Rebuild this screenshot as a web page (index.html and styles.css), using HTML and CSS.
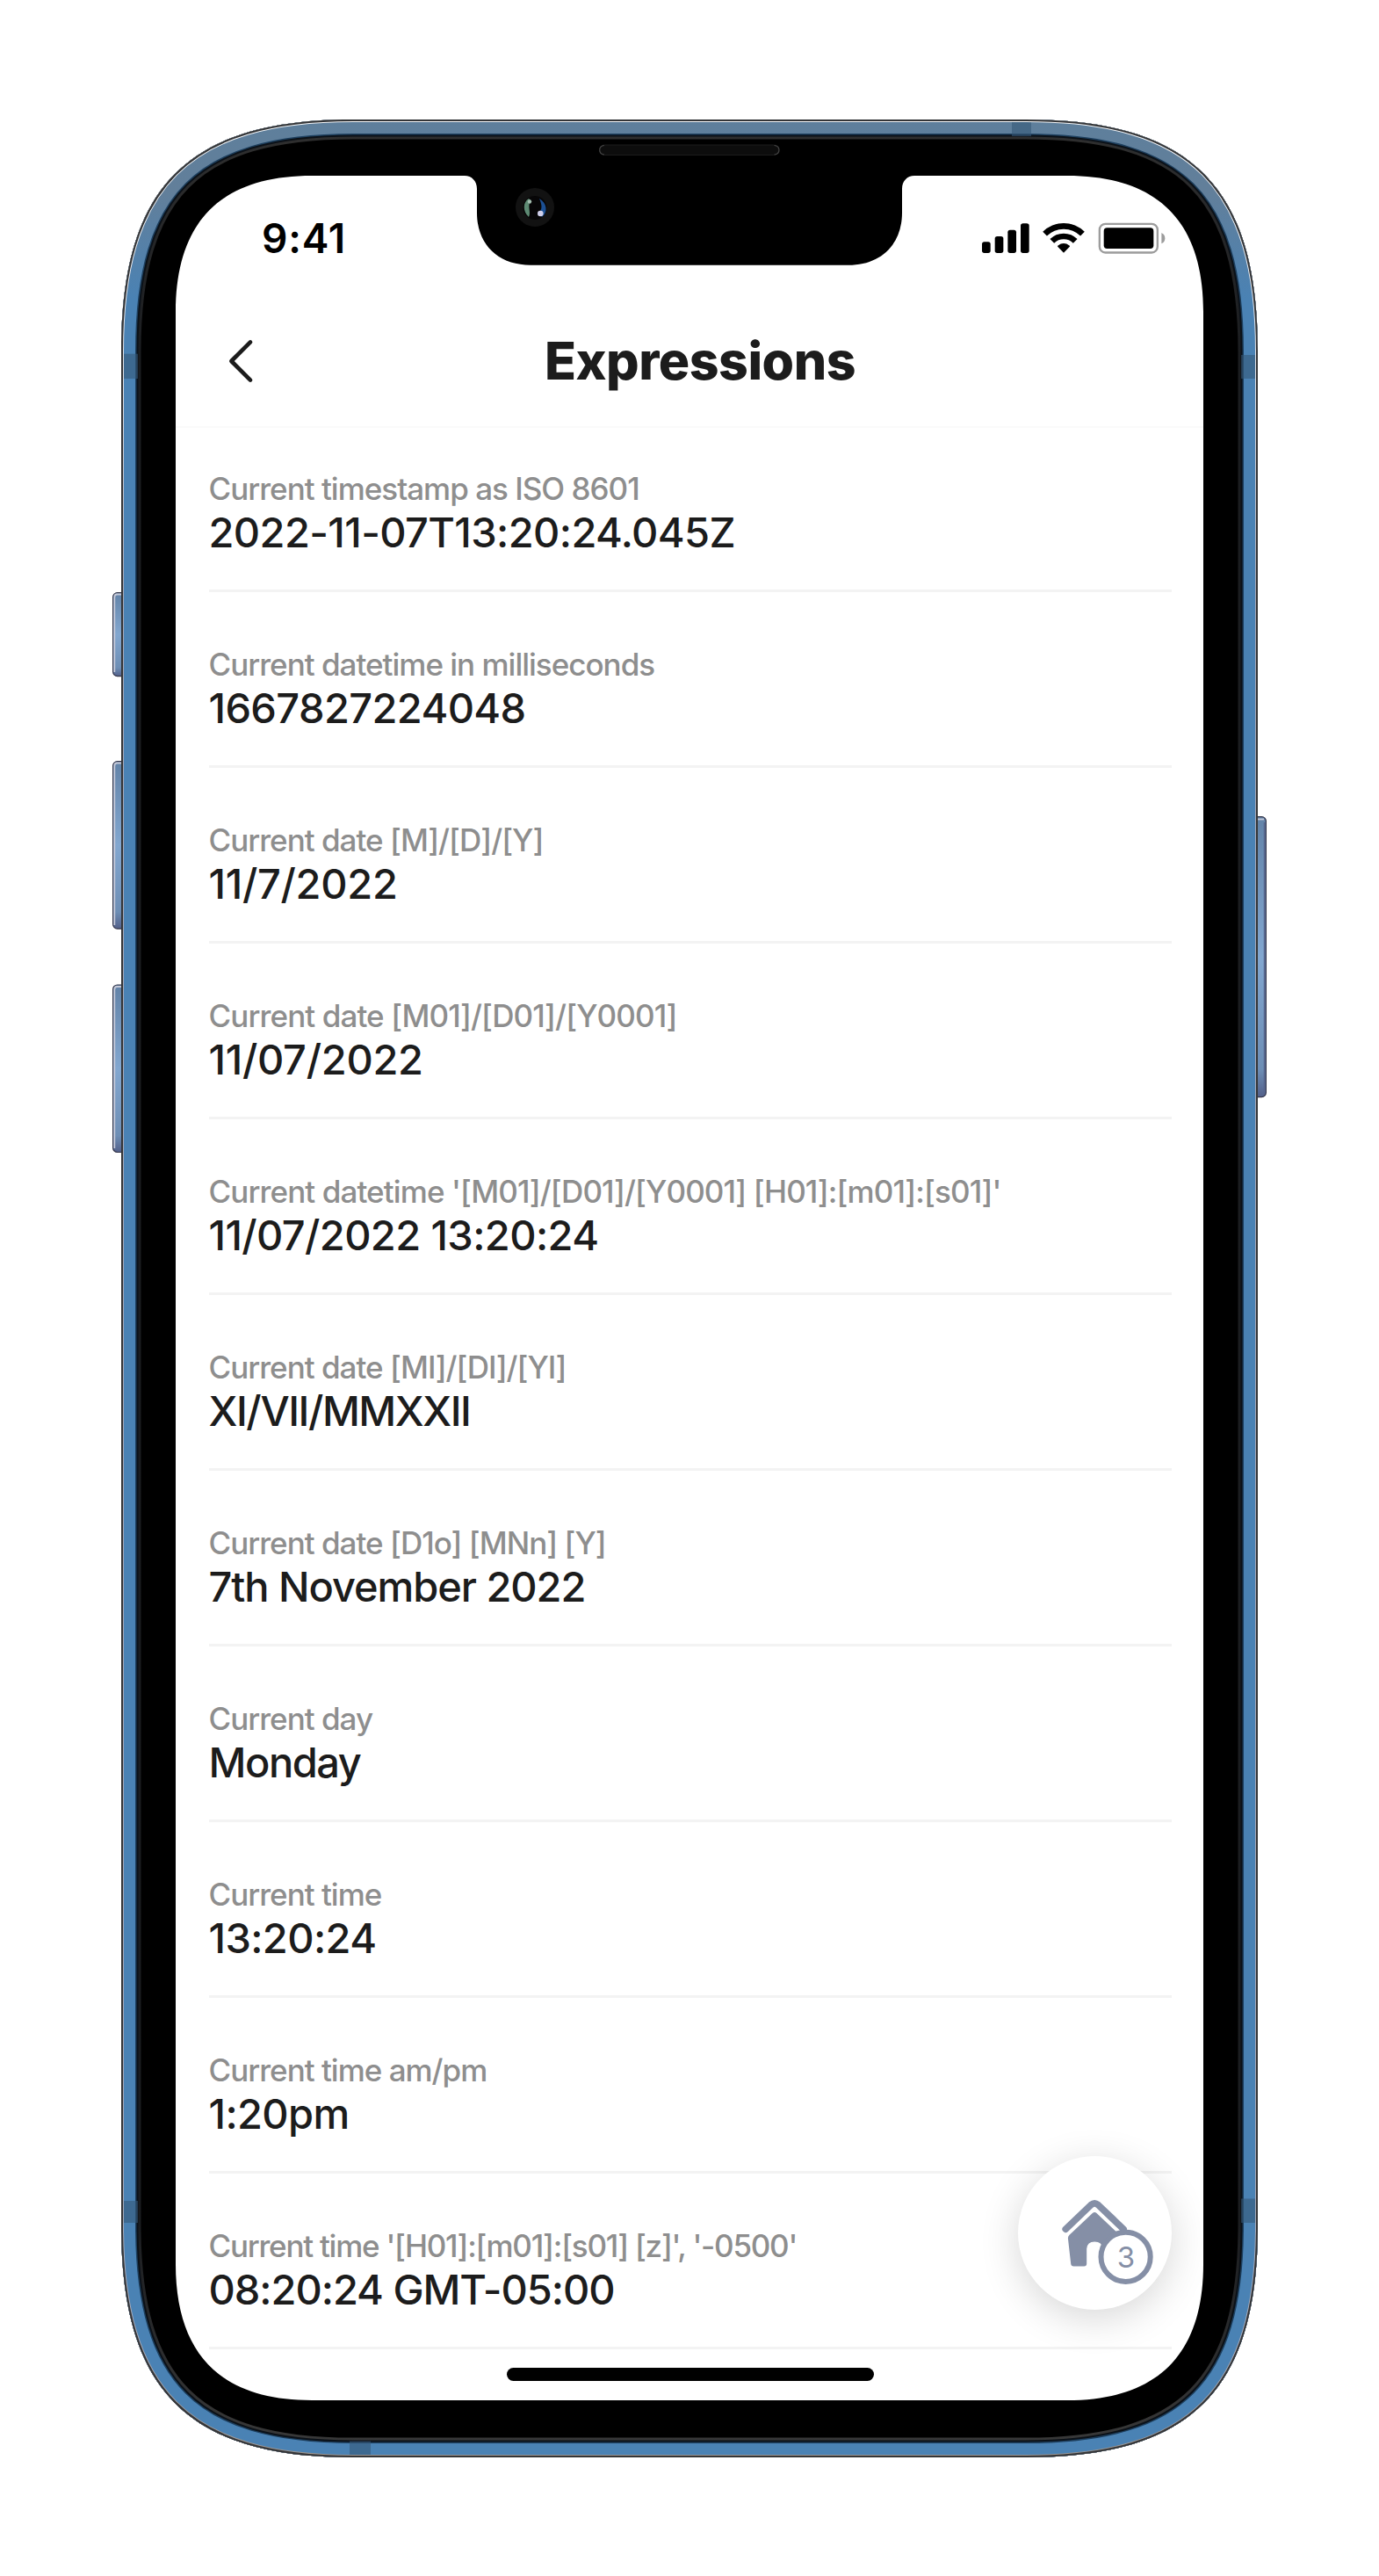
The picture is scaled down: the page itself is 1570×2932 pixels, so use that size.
FILE: index.html
```html
<!DOCTYPE html>
<html lang="en">
<head>
<meta charset="utf-8">
<title>Expressions</title>
<link rel="stylesheet" href="styles.css">
</head>
<body>
<main class="device">
  <div class="screen">
    <div class="status">
      <span class="clock">9:41</span>
      <svg class="status-icons" viewBox="233 398 626 108" aria-hidden="true">
        <rect x="233" y="465" width="29" height="38" rx="8"/>
        <rect x="277" y="446" width="29" height="57" rx="8"/>
        <rect x="321" y="424" width="29" height="79" rx="8"/>
        <rect x="365" y="402" width="29" height="101" rx="8"/>
        <g fill="none" stroke="#000" stroke-width="20">
          <path d="M447.700 437.700A91 91 0 0 1 576.300 437.700"/>
          <path d="M472.400 462.400A56 56 0 0 1 551.600 462.400"/>
        </g>
        <path d="M512 502L491.500 481.500Q490 479 492.500 477.500Q512 463 531.500 477.500Q534 479 532.500 481.500Z"/>
        <rect x="634.500" y="403.500" width="198" height="98" rx="20" fill="none" stroke="#9c9c9c" stroke-width="7"/>
        <rect x="649" y="417" width="170" height="71" rx="11"/>
        <path d="M846 434Q858 440 858 452.500T846 471Z" fill="#9c9c9c"/>
      </svg>
    </div>
    <header class="header">
      <svg class="back" viewBox="0 0 32 52" aria-hidden="true"><path d="M27 4.400L5.400 26L27 47.600"/></svg>
      <h1 class="title">Expressions</h1>
    </header>
    <ul class="list">
      <li class="row"><span class="label">Current timestamp as ISO 8601</span><span class="value">2022-11-07T13:20:24.045Z</span></li>
      <li class="row"><span class="label">Current datetime in milliseconds</span><span class="value">1667827224048</span></li>
      <li class="row"><span class="label">Current date [M]/[D]/[Y]</span><span class="value loose">11/7/2022</span></li>
      <li class="row"><span class="label loose">Current date [M01]/[D01]/[Y0001]</span><span class="value loose">11/07/2022</span></li>
      <li class="row"><span class="label loose">Current datetime '[M01]/[D01]/[Y0001] [H01]:[m01]:[s01]'</span><span class="value">11/07/2022 13:20:24</span></li>
      <li class="row"><span class="label">Current date [MI]/[DI]/[YI]</span><span class="value tighter">XI/VII/MMXXII</span></li>
      <li class="row"><span class="label">Current date [D1o] [MNn] [Y]</span><span class="value tight">7th November 2022</span></li>
      <li class="row"><span class="label">Current day</span><span class="value tighter">Monday</span></li>
      <li class="row"><span class="label">Current time</span><span class="value">13:20:24</span></li>
      <li class="row"><span class="label">Current time am/pm</span><span class="value">1:20pm</span></li>
      <li class="row"><span class="label tight">Current time '[H01]:[m01]:[s01] [z]', '-0500'</span><span class="value tight">08:20:24 GMT-05:00</span></li>
    </ul>
    <div class="home-indicator"></div>
    <div class="fab">
      <svg class="fab-icon" viewBox="296 163 526 526" aria-hidden="true">
        <path d="M459 413L546 330Q558 320 570 330L657 413" fill="none" stroke="#858fa6" stroke-width="23" stroke-linecap="round"/>
        <path d="M467 444Q467 438 472 433L551 358Q558 352 565 358L645 434L640 540H592Q586 540 586 534V480Q584 456 558 456Q533 456 531 480V531Q531 540 522 540H486Q478 540 477 532Z" fill="#858fa6"/>
        <circle cx="664.500" cy="508" r="84.500" fill="#fff" stroke="#858fa6" stroke-width="18"/>
      </svg>
      <span class="badge">3</span>
    </div>
  </div>

  <svg class="frame" viewBox="128 136 1314 2661" aria-hidden="true">
    <defs>
      <path id="body" d="M138 400C138 212 214 136 402 136H1168C1356 136 1432 212 1432 400V2533C1432 2721 1356 2797 1168 2797H402C214 2797 138 2721 138 2533Z"/>
      <path id="bezel" clip-rule="evenodd" d="M138 400C138 212 214 136 402 136H1168C1356 136 1432 212 1432 400V2533C1432 2721 1356 2797 1168 2797H402C214 2797 138 2721 138 2533ZM200 355C200 252 252 200 355 200H529C537 200 543 206 543 215V242C543 279 568 301.700 604 301.700H966C1002 301.700 1027 279 1027 242V215C1027 206 1033 200 1041 200H1215C1318 200 1370 252 1370 355V2577C1370 2680 1318 2732 1215 2732H355C252 2732 200 2680 200 2577Z"/>
      <clipPath id="bezelClip"><use href="#bezel" clip-rule="evenodd"/></clipPath>
      <linearGradient id="metal" gradientUnits="userSpaceOnUse" x1="0" y1="136" x2="0" y2="340">
        <stop offset="0" stop-color="#5e7f9c"/><stop offset=".4" stop-color="#627f9a"/><stop offset="1" stop-color="#4a82b4"/>
      </linearGradient>
      <linearGradient id="key" x1="0" y1="0" x2="0" y2="1">
        <stop offset="0" stop-color="#6283a8"/><stop offset=".5" stop-color="#82a7d0"/><stop offset=".9" stop-color="#6d8eb5"/><stop offset="1" stop-color="#53608a"/>
      </linearGradient>
      <linearGradient id="rim" gradientUnits="userSpaceOnUse" x1="0" y1="136" x2="0" y2="2797">
        <stop offset="0" stop-color="#303030"/><stop offset=".1" stop-color="#1b1d20"/><stop offset=".9" stop-color="#1b1d20"/><stop offset="1" stop-color="#3a3a3a"/>
      </linearGradient>
      <linearGradient id="glint" gradientUnits="userSpaceOnUse" x1="0" y1="136" x2="0" y2="2797">
        <stop offset="0" stop-color="#f4f6f8"/><stop offset=".12" stop-color="#dfe0e6"/><stop offset=".2" stop-color="#a7abba"/><stop offset=".95" stop-color="#a7abba"/><stop offset="1" stop-color="#99938e"/>
      </linearGradient>
    </defs>

    <g fill="url(#key)" stroke="#34364a" stroke-width="1.200">
      <rect x="128.600" y="674.600" width="20" height="95" rx="5"/>
      <rect x="128.600" y="866.600" width="20" height="190.500" rx="5"/>
      <rect x="128.600" y="1121" width="20" height="190.500" rx="5"/>
      <rect x="1421.400" y="929.600" width="20" height="319" rx="5"/>
    </g>
    <g fill="none" stroke="#c5c9d8" stroke-width="1.800">
      <path d="M138 676.500H133Q130.300 676.500 130.300 680V765"/>
      <path d="M138 868.500H133Q130.300 868.500 130.300 872V1053"/>
      <path d="M138 1123H133Q130.300 1123 130.300 1126.500V1307"/>
      <path d="M1432 932.500H1439"/>
    </g>
    <path d="M1439.800 936V1244" stroke="#56658c" stroke-width="2"/>

    <g clip-path="url(#bezelClip)">
      <use href="#body" fill="#000" stroke="url(#rim)" stroke-width="45"/>
      <use href="#body" fill="none" stroke="#0b1118" stroke-width="39"/>
      <use href="#body" fill="none" stroke="#1d3f5e" stroke-width="35"/>
      <use href="#body" fill="none" stroke="url(#metal)" stroke-width="32"/>
      <g fill="#365878" fill-opacity=".6">
        <rect x="140" y="402.700" width="17" height="28.300"/>
        <rect x="140" y="2505" width="17" height="25"/>
        <rect x="1413" y="404" width="17" height="27"/>
        <rect x="1413" y="2502.500" width="17" height="27.500"/>
        <rect x="1152" y="139" width="22" height="16"/>
        <rect x="398" y="2778.500" width="24" height="16"/>
      </g>
      <use href="#body" fill="none" stroke="url(#glint)" stroke-width="6"/>
      <use href="#body" fill="none" stroke="#343537" stroke-width="4"/>
    </g>

    <rect x="682.500" y="165" width="204" height="11.500" rx="5.700" fill="#0d0d0d" stroke="#1c1c1c"/>
    <path d="M688 165.500Q682.700 166 682.700 170.700T688 176M881.500 165.500Q887 166 887 170.700T881.500 176" fill="none" stroke="#444" stroke-width="1.200"/>
    <circle cx="609" cy="236" r="22" fill="#121212"/>
    <circle cx="609" cy="236.500" r="13.500" fill="#070607"/>
    <path d="M602 226C595 230 595 241 602 247C605 241 600 236 604 228Z" fill="#5d8a73"/>
    <path d="M614 226C623 231 624 242 617 247L613 243C618 238 617 233 614 226Z" fill="#1b4f93"/>
    <circle cx="603" cy="229.500" r="2.200" fill="#a4beb0"/>
    <circle cx="615.300" cy="243" r="3.300" fill="#cfcfea"/>
  </svg>
</main>
</body>
</html>
```
FILE: styles.css
```css
* {
  box-sizing: border-box;
}

body {
  margin: 0;
  background: #fff;
  font-family: Inter, "Liberation Sans", sans-serif;
  color: #1c1c1c;
}

.device {
  display: grid;
  width: 1314px;
  height: 2661px;
  margin: 136px 128px 135px;
}

.screen,
.frame {
  grid-area: 1 / 1;
}

.frame {
  position: relative;
  width: 1314px;
  height: 2661px;
  pointer-events: none;
}

.screen {
  position: relative;
  display: flex;
  flex-direction: column;
  width: 1170px;
  height: 2532px;
  margin: 64px 72px;
  overflow: hidden;
  border-radius: 130px;
  background: #fff;
}

.status {
  display: flex;
  align-items: center;
  justify-content: space-between;
  height: 141px;
  padding: 0 43px 0 98px;
  color: #000;
}

.clock {
  font-size: 46px;
  font-weight: 600;
  line-height: 56px;
  letter-spacing: 0.8px;
}

.status-icons {
  width: 208.700px;
  height: 36px;
}

.header {
  display: grid;
  grid-template-columns: 114px 1fr 90px;
  align-items: center;
  height: 146px;
  padding-bottom: 5px;
  border-bottom: 2px solid #fafafa;
}

.back {
  width: 32px;
  height: 52px;
  margin-left: 57.500px;
  fill: none;
  stroke: #1c1c1c;
  stroke-width: 4.700px;
  stroke-linecap: round;
  stroke-linejoin: round;
}

.title {
  margin: 0;
  font-size: 59px;
  font-weight: 800;
  line-height: 72px;
  letter-spacing: -0.5px;
  text-align: center;
}

.list {
  margin: 0;
  padding: 0 36px 0 38px;
  list-style: none;
}

.row {
  display: flex;
  flex-direction: column;
  justify-content: flex-end;
  height: 200px;
  padding-bottom: 37px;
  border-bottom: 3px solid #f3f3f3;
  white-space: nowrap;
}

.row:first-child {
  height: 187px;
}

.label {
  margin-left: -0.5px;
  font-size: 35px;
  font-weight: 450;
  line-height: 44px;
  letter-spacing: -1px;
  color: #8e8e8e;
}

.label.loose {
  letter-spacing: -0.9px;
}

.label.tight {
  letter-spacing: -1.25px;
}

.value {
  margin-left: -0.5px;
  font-size: 47px;
  font-weight: 500;
  line-height: 56px;
  letter-spacing: -0.62px;
}

.value.loose {
  letter-spacing: -0.3px;
}

.value.tight {
  letter-spacing: -1.05px;
}

.value.tighter {
  letter-spacing: -1.45px;
}

.home-indicator {
  width: 418px;
  height: 15px;
  margin: 21px 0 0 377px;
  border-radius: 8px;
  background: #000;
}

.fab {
  position: absolute;
  left: 959px;
  top: 2254px;
  width: 175px;
  height: 175px;
  border-radius: 50%;
  background: #fff;
  box-shadow: 0 10px 45px rgba(0, 0, 0, 0.16);
}

.fab-icon {
  display: block;
  width: 175px;
  height: 175px;
}

.badge {
  position: absolute;
  left: 92px;
  top: 84px;
  width: 62px;
  font-size: 33px;
  line-height: 62px;
  text-align: center;
  color: #858fa6;
}
```
